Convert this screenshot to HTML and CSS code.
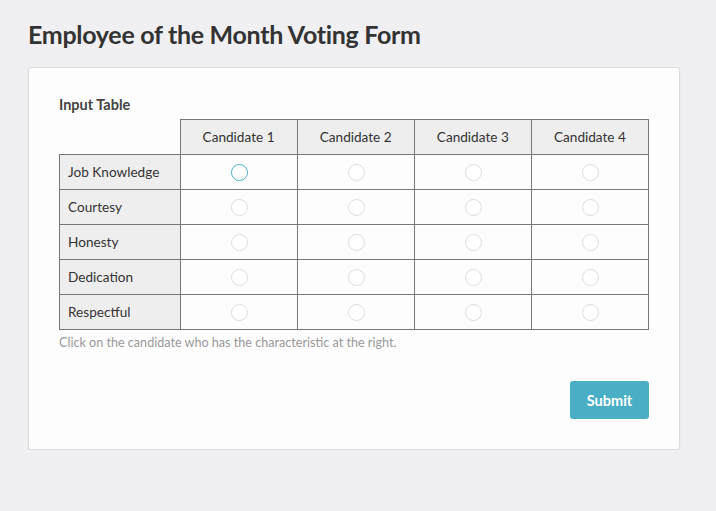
FILE: index.html
```html
<!DOCTYPE html>
<html>
<head>
<meta charset="utf-8">
<link rel="stylesheet" href="styles.css">
</head>
<body>
<div class="page">
  <h1 class="title">Employee of the Month Voting Form</h1>
  <div class="card">
    <div class="label">Input Table</div>
    <table class="grid">
      <thead>
        <tr>
          <th class="corner"></th>
          <th>Candidate 1</th>
          <th>Candidate 2</th>
          <th>Candidate 3</th>
          <th>Candidate 4</th>
        </tr>
      </thead>
      <tbody>
        <tr><td class="rowhead">Job Knowledge</td><td><span class="radio focus"></span></td><td><span class="radio"></span></td><td><span class="radio"></span></td><td><span class="radio"></span></td></tr>
        <tr><td class="rowhead">Courtesy</td><td><span class="radio"></span></td><td><span class="radio"></span></td><td><span class="radio"></span></td><td><span class="radio"></span></td></tr>
        <tr><td class="rowhead">Honesty</td><td><span class="radio"></span></td><td><span class="radio"></span></td><td><span class="radio"></span></td><td><span class="radio"></span></td></tr>
        <tr><td class="rowhead">Dedication</td><td><span class="radio"></span></td><td><span class="radio"></span></td><td><span class="radio"></span></td><td><span class="radio"></span></td></tr>
        <tr><td class="rowhead">Respectful</td><td><span class="radio"></span></td><td><span class="radio"></span></td><td><span class="radio"></span></td><td><span class="radio"></span></td></tr>
      </tbody>
    </table>
    <div class="hint">Click on the candidate who has the characteristic at the right.</div>
    <div class="actions">
      <button class="submit">Submit</button>
    </div>
  </div>
</div>
</body>
</html>
```
FILE: styles.css
```css
html, body {
  margin: 0;
  padding: 0;
  background: #f0f0f2;
  font-family: "Lato", "Open Sans", sans-serif;
  color: #333;
}
.page {
  padding: 19px 36px 0 28px;
  width: 652px;
}
.title {
  margin: 0 0 18px 0;
  font-size: 25px;
  line-height: 30px;
  font-weight: 700;
  color: #333;
  letter-spacing: -0.3px;
}
.card {
  background: #fdfdfd;
  border: 1px solid #dcdcdc;
  border-radius: 3px;
  box-shadow: 0 1px 2px rgba(0,0,0,0.06);
  padding: 28px 30px 30px 30px;
}
.label {
  font-size: 14.5px;
  font-weight: 700;
  color: #444;
  line-height: 18px;
  margin-bottom: 5px;
}
.grid {
  border-collapse: collapse;
  width: 590px;
  table-layout: fixed;
}
.grid th, .grid td {
  border: 1px solid #777;
  height: 34px;
  padding: 0;
  font-size: 13.6px;
  font-weight: 400;
  color: #333;
  text-align: center;
  vertical-align: middle;
}
.grid th {
  background: #eee;
}
.grid th.corner {
  width: 120px;
  background: transparent;
  border-top: none;
  border-left: none;
}
.grid td.rowhead {
  background: #eee;
  text-align: left;
  padding-left: 8px;
}
.radio {
  display: inline-block;
  width: 15px;
  height: 15px;
  border: 1px solid #ddd;
  border-radius: 50%;
  vertical-align: middle;
  background: #fff;
  margin-left: 2px;
}
.radio.focus {
  border-color: #4aafc4;
}
.hint {
  margin-top: 5px;
  font-size: 12.6px;
  color: #999;
  line-height: 16px;
}
.actions {
  display: flex;
  justify-content: flex-end;
  margin-top: 30px;
}
.submit {
  background: #4aafc4;
  color: #fff;
  border: none;
  border-radius: 3px;
  width: 79px;
  height: 38px;
  font-family: inherit;
  font-size: 14.5px;
  font-weight: 700;
  margin-right: 0;
}
```
